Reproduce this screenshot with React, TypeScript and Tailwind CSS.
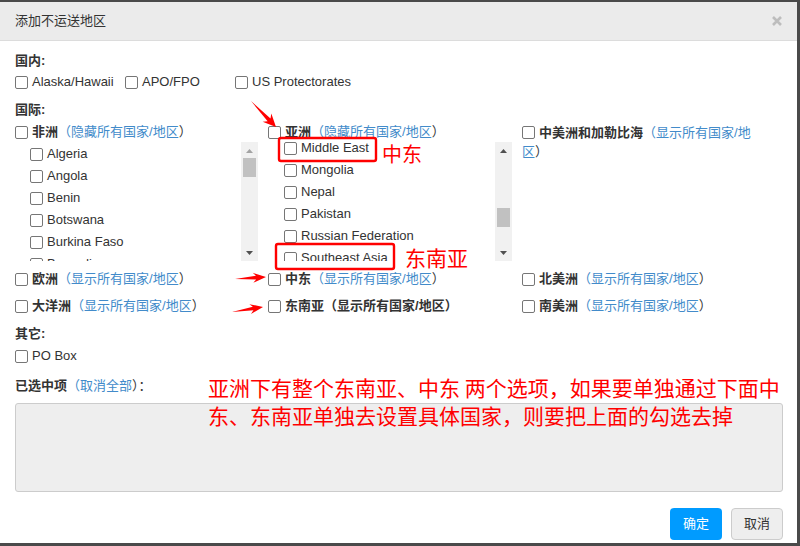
import React from "react";

const LINK = "text-[#428bca]";

function Box() {
  return (
    <input
      type="checkbox"
      className="appearance-none w-[13px] h-[13px] border border-[#767676] rounded-[2px] bg-white shrink-0 m-0 align-middle"
    />
  );
}

function ScrollBar({ thumbTop, upDisabled }: { thumbTop: number; upDisabled?: boolean }) {
  return (
    <svg width="17" height="119" className="shrink-0 block">
      <rect x="0" y="0" width="17" height="119" fill="#f1f1f1" />
      <path d="M5 11 L8.5 7 L12 11 Z" fill={upDisabled ? "#a3a3a3" : "#505050"} />
      <rect x="2" y={thumbTop} width="13" height="19" fill="#c1c1c1" />
      <path d="M5 109 L8.5 113 L12 109 Z" fill="#505050" />
    </svg>
  );
}

function Item({ name, pl }: { name: string; pl: string }) {
  return (
    <label className={`h-[22px] flex items-center ${pl} whitespace-nowrap`}>
      <Box />
      <span className="ml-[4px]">{name}</span>
    </label>
  );
}

const AFRICA = ["Algeria", "Angola", "Benin", "Botswana", "Burkina Faso", "Burundi", "Cameroon", "Cape Verde"];
const ASIA = [
  "Afghanistan", "Armenia", "Azerbaijan", "Bangladesh", "Bhutan", "Brunei", "Cambodia", "China", "India",
  "Japan", "Kazakhstan", "Laos", "Maldives", "Middle East", "Mongolia", "Nepal", "Pakistan",
  "Russian Federation", "Southeast Asia", "Sri Lanka", "Taiwan",
];

function Arrow({ x1, y1, x2, y2, head = 5.5, shaft = 1.8 }: { x1: number; y1: number; x2: number; y2: number; head?: number; shaft?: number }) {
  const dx = x2 - x1;
  const dy = y2 - y1;
  const L = Math.sqrt(dx * dx + dy * dy);
  const ux = dx / L;
  const uy = dy / L;
  const px = -uy;
  const py = ux;
  const pt = (s: number, w: number) => `${x1 + ux * s + px * w},${y1 + uy * s + py * w}`;
  const pts = [pt(0, 0), pt(L - 10, -shaft), pt(L - 13, -head), pt(L, 0), pt(L - 13, head), pt(L - 10, shaft)].join(" ");
  return <polygon points={pts} fill="#ff0000" />;
}

function ContinentHeader({ name, link, dark }: { name: string; link: string; dark?: boolean }) {
  return (
    <div className="h-[20px] flex items-center whitespace-nowrap">
      <Box />
      <span className="ml-[4px] font-bold">{name}</span>
      {dark ? (
        <span className="font-bold">（{link}）</span>
      ) : (
        <>
          <span className={LINK}>（{link}</span>
          <span>）</span>
        </>
      )}
    </div>
  );
}

export default function App() {
  return (
    <div className="relative w-[800px] h-[546px] bg-[#4a4a4a] pt-[2px] pr-[3px] pb-[3px] font-['Liberation_Sans','Noto_Sans_CJK_SC',sans-serif] text-[13px] text-[#333]">
      <div className="h-full bg-white flex flex-col">
        {/* header */}
        <div className="h-[39px] shrink-0 bg-[#ebebeb] border-b border-[#dcdcdc] flex items-center justify-between pl-[15px] pr-[15px]">
          <span className="text-[13px] text-[#333] leading-[18px]">添加不运送地区</span>
          <svg width="10" height="10" viewBox="0 0 10 10">
            <path d="M1 1 L9 9 M9 1 L1 9" stroke="#bdbdbd" strokeWidth="2.6" />
          </svg>
        </div>

        {/* body */}
        <div className="pl-[15px] pr-[14px] flex flex-col">
          <div className="mt-[10px] h-[20px] flex items-center font-bold">国内:</div>
          <div className="h-[22px] flex items-center">
            {["Alaska/Hawaii", "APO/FPO", "US Protectorates"].map((n) => (
              <label key={n} className="w-[110px] flex items-center whitespace-nowrap">
                <Box />
                <span className="ml-[4px]">{n}</span>
              </label>
            ))}
          </div>
          <div className="mt-[7px] h-[20px] flex items-center font-bold">国际:</div>

          <div className="mt-[2px] grid grid-cols-[253px_254px_240px]">
            <div className="flex flex-col">
              <ContinentHeader name="非洲" link="隐藏所有国家/地区" />
              <div className="w-[243px] h-[119px] flex">
                <div className="flex-1 overflow-hidden">
                  <div className="pt-[1px]">
                    {AFRICA.map((n) => (
                      <Item key={n} name={n} pl="pl-[15px]" />
                    ))}
                  </div>
                </div>
                <ScrollBar thumbTop={16} upDisabled />
              </div>
            </div>
            <div className="flex flex-col">
              <ContinentHeader name="亚洲" link="隐藏所有国家/地区" />
              <div className="w-[244px] h-[119px] flex">
                <div className="flex-1 overflow-hidden">
                  <div className="pt-[1px] -mt-[292px]">
                    {ASIA.map((n) => (
                      <Item key={n} name={n} pl="pl-[16px]" />
                    ))}
                  </div>
                </div>
                <ScrollBar thumbTop={66} />
              </div>
            </div>
            <div className="h-[20px]">
              <div className="pt-[1px] leading-[18px]">
                <Box />
                <span className="ml-[4px] font-bold align-middle">中美洲和加勒比海</span>
                <span className={`${LINK} align-middle`}>（显示所有国家/地区</span>
                <span className="align-middle">）</span>
              </div>
            </div>
          </div>

          <div className="mt-[8px] grid grid-cols-[253px_254px_1fr]">
            <ContinentHeader name="欧洲" link="显示所有国家/地区" />
            <ContinentHeader name="中东" link="显示所有国家/地区" />
            <ContinentHeader name="北美洲" link="显示所有国家/地区" />
          </div>
          <div className="mt-[7px] grid grid-cols-[253px_254px_1fr]">
            <ContinentHeader name="大洋洲" link="显示所有国家/地区" />
            <ContinentHeader name="东南亚" link="显示所有国家/地区" dark />
            <ContinentHeader name="南美洲" link="显示所有国家/地区" />
          </div>

          <div className="mt-[8px] h-[20px] flex items-center font-bold">其它:</div>
          <label className="mt-[2px] h-[20px] flex items-center">
            <Box />
            <span className="ml-[4px]">PO Box</span>
          </label>

          <div className="mt-[10px] h-[20px] flex items-center whitespace-nowrap">
            <span className="font-bold">已选中项</span>
            <span className={LINK}>（取消全部</span>
            <span>）：</span>
          </div>

          <div className="mt-[7px] h-[89px] bg-[#eeeeee] border border-[#cccccc] rounded-[3px]" />

          <div className="mt-[16px] h-[32px] flex justify-end gap-[9px]">
            <button className="w-[52px] h-[32px] rounded-[4px] bg-[#009bff] text-white text-[13px]">确定</button>
            <button className="w-[52px] h-[32px] rounded-[4px] bg-[#eeeeee] border border-[#cccccc] text-[#333] text-[13px]">取消</button>
          </div>
        </div>
      </div>

      {/* red annotations */}
      <svg className="absolute left-0 top-0 pointer-events-none" width="800" height="546">
        <rect x="279" y="138" width="97" height="23" rx="2" fill="none" stroke="#ff0000" strokeWidth="2.4" />
        <rect x="276" y="244" width="118" height="25" rx="2" fill="none" stroke="#ff0000" strokeWidth="2.4" />
        <Arrow x1={251} y1={101} x2={276} y2={127} head={6} shaft={2} />
        <Arrow x1={235} y1={279} x2={266} y2={277} head={5} shaft={1.8} />
        <Arrow x1={232} y1={312} x2={263} y2={307} head={5} shaft={1.8} />
      </svg>
      <div className="absolute left-[382px] top-[143px] text-[20px] leading-[21px] text-[#ff0000] font-['Noto_Sans_CJK_SC',sans-serif] whitespace-nowrap">
        中东
      </div>
      <div className="absolute left-[405px] top-[246px] text-[21px] leading-[22px] text-[#ff0000] font-['Noto_Sans_CJK_SC',sans-serif] whitespace-nowrap">
        东南亚
      </div>
      <div className="absolute left-[208px] top-[373px] text-[21px] leading-[28px] text-[#ff0000] font-['Noto_Sans_CJK_SC',sans-serif] whitespace-nowrap">
        亚洲下有整个东南亚、中东 两个选项，如果要单独通过下面中
        <br />
        东、东南亚单独去设置具体国家，则要把上面的勾选去掉
      </div>
    </div>
  );
}
